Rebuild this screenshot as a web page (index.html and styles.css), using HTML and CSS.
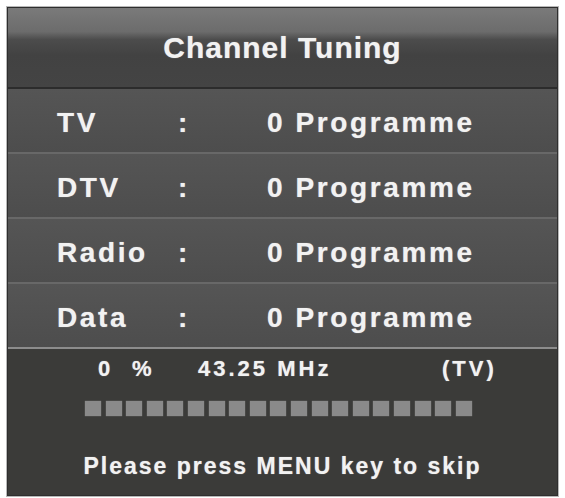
FILE: index.html
```html
<!DOCTYPE html>
<html>
<head>
<meta charset="utf-8">
<link rel="stylesheet" href="styles.css">
</head>
<body>
<div class="panel">
  <div class="title">Channel Tuning</div>
  <div class="rows">
    <div class="row"><span class="label">TV</span><span class="colon">:</span><span class="value">0 Programme</span></div>
    <div class="row"><span class="label">DTV</span><span class="colon">:</span><span class="value">0 Programme</span></div>
    <div class="row"><span class="label">Radio</span><span class="colon">:</span><span class="value">0 Programme</span></div>
    <div class="row"><span class="label">Data</span><span class="colon">:</span><span class="value">0 Programme</span></div>
  </div>
  <div class="bottom">
    <div class="status">
      <span class="pct-num">0</span><span class="pct">%</span><span class="freq">43.25 MHz</span><span class="type">(TV)</span>
    </div>
    <div class="progress">
      <span class="sq"></span><span class="sq"></span><span class="sq"></span><span class="sq"></span><span class="sq"></span>
      <span class="sq"></span><span class="sq"></span><span class="sq"></span><span class="sq"></span><span class="sq"></span>
      <span class="sq"></span><span class="sq"></span><span class="sq"></span><span class="sq"></span><span class="sq"></span>
      <span class="sq"></span><span class="sq"></span><span class="sq"></span><span class="sq"></span>
    </div>
    <div class="hint">Please press MENU key to skip</div>
  </div>
</div>
</body>
</html>
```
FILE: styles.css
```css
html, body {
  margin: 0;
  padding: 0;
  background: #ffffff;
}
body {
  width: 565px;
  height: 498px;
  overflow: hidden;
  font-family: "Liberation Sans", Arial, sans-serif;
  font-weight: bold;
  color: #f2f2f2;
}
.panel {
  margin: 7px 0 0 7px;
  width: 551px;
  height: 489px;
  box-sizing: border-box;
  border: 1px solid #2e2e2e;
  outline: 1px solid #b8b8b8;
  background: #3c3c3a;
  display: flex;
  flex-direction: column;
  text-shadow: 0 0 1px rgba(255,255,255,0.6);
}
.title {
  height: 79px;
  line-height: 79px;
  text-align: center;
  font-size: 30px;
  letter-spacing: 1px;
  background: linear-gradient(#7a7a7a 0%, #6c6c6c 30%, #4c4c4c 40%, #424242 60%, #444444 100%);
  border-bottom: 2px solid #2c2c2c;
}
.rows {
  display: flex;
  flex-direction: column;
}
.row {
  display: grid;
  grid-template-columns: 120px 90px auto;
  padding-left: 49px;
  padding-top: 4px;
  height: 59px;
  line-height: 59px;
  font-size: 28px;
  letter-spacing: 2.6px;
  background: linear-gradient(#555555, #4d4d4d);
  border-bottom: 2px solid #686868;
}
.row:last-child {
  border-bottom: 2px solid #8c8c8c;
}
.colon {
  padding-left: 1px;
}
.bottom {
  flex: 1;
  display: flex;
  flex-direction: column;
  background: #3b3b39;
}
.status {
  display: flex;
  margin-top: 9px;
  padding-left: 90px;
  height: 22px;
  line-height: 22px;
  font-size: 22px;
  letter-spacing: 3px;
}
.pct-num {
  width: 34px;
}
.pct {
  width: 66px;
}
.freq {
  width: 244px;
}
.progress {
  display: flex;
  gap: 4.6px;
  margin-top: 21px;
  padding-left: 77px;
}
.sq {
  width: 16px;
  height: 15px;
  background: #8a8a8a;
  box-shadow: 0 0 1px #8a8a8a;
}
.hint {
  margin-top: 39px;
  height: 23px;
  line-height: 23px;
  font-size: 23px;
  letter-spacing: 2px;
  text-align: center;
}
```
